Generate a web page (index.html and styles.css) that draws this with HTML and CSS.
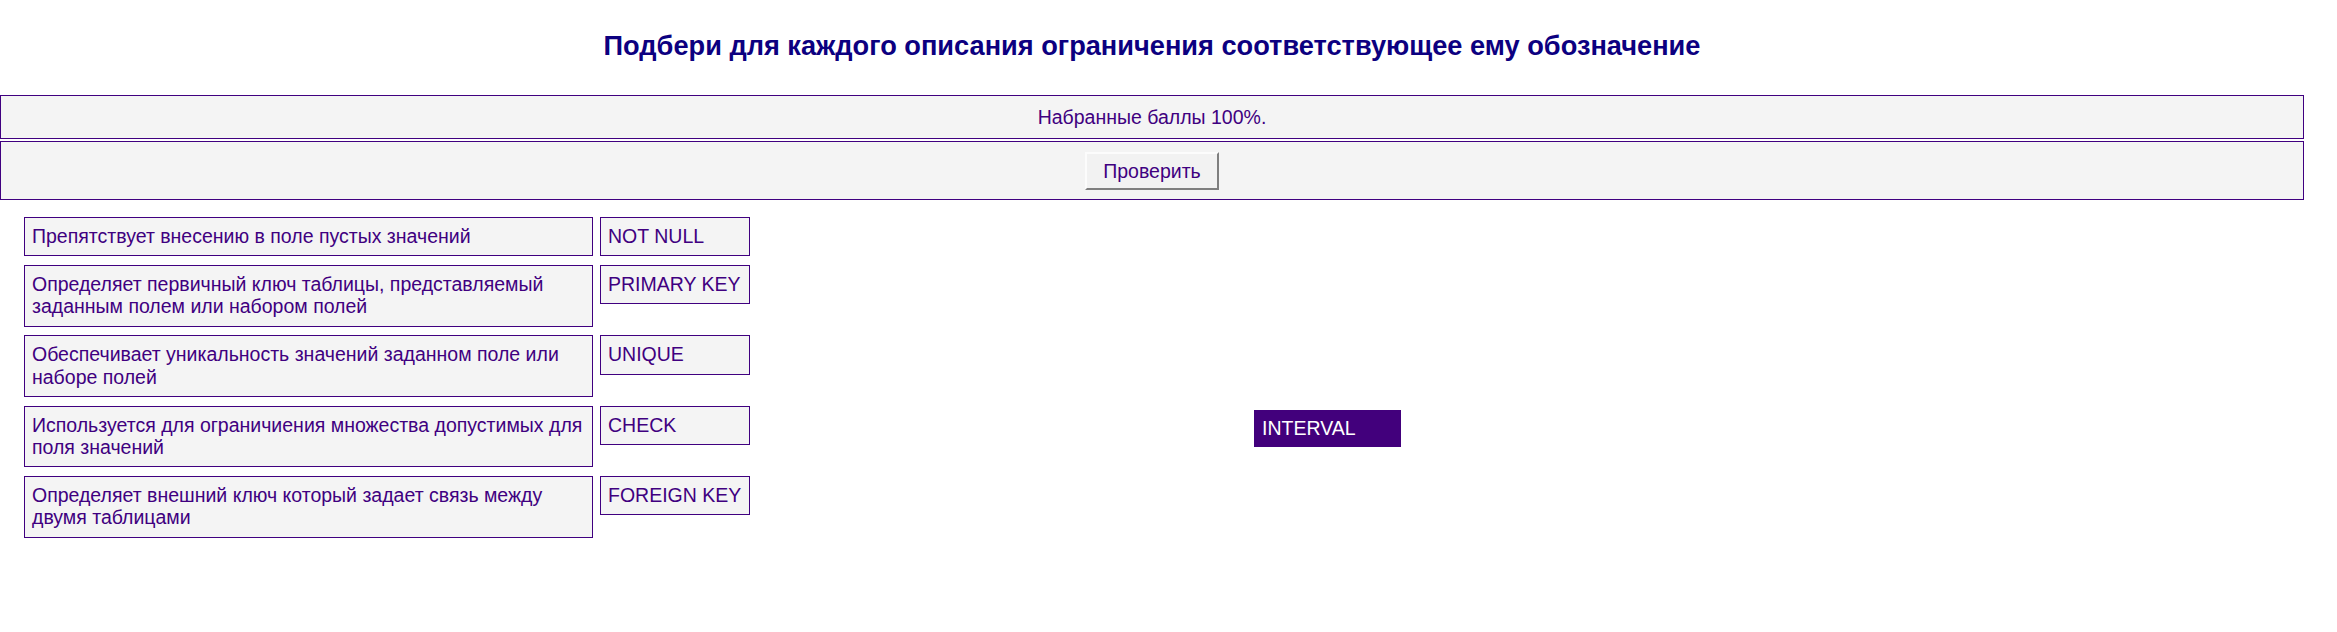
FILE: index.html
```html
<!DOCTYPE html>
<html lang="ru">
<head>
  <meta charset="UTF-8">
  <title>Ограничения</title>
  <link rel="stylesheet" href="styles.css">
</head>
<body>
  <div class="page">
    <h1 class="title">Подбери для каждого описания ограничения соответствующее ему обозначение</h1>

    <div class="panel score">Набранные баллы 100%.</div>
    <div class="panel actions">
      <button class="check-btn">Проверить</button>
    </div>

    <div class="task">
      <div class="pairs">
        <div class="pair">
          <div class="desc">Препятствует внесению в поле пустых значений</div>
          <div class="term">NOT NULL</div>
        </div>
        <div class="pair">
          <div class="desc">Определяет первичный ключ таблицы, представляемый заданным полем или набором полей</div>
          <div class="term">PRIMARY KEY</div>
        </div>
        <div class="pair">
          <div class="desc">Обеспечивает уникальность значений заданном поле или наборе полей</div>
          <div class="term">UNIQUE</div>
        </div>
        <div class="pair">
          <div class="desc">Используется для ограничиения множества допустимых для поля значений</div>
          <div class="term">CHECK</div>
        </div>
        <div class="pair">
          <div class="desc">Определяет внешний ключ который задает связь между двумя таблицами</div>
          <div class="term">FOREIGN KEY</div>
        </div>
      </div>

      <!-- unused answers -->
      <div class="pool">
        <div class="term free">INTERVAL</div>
      </div>
    </div>
  </div>
</body>
</html>
```

FILE: styles.css
```css
body {
  margin: 0;
  font-family: "Liberation Sans", Arial, sans-serif;
  font-size: 19.5px;
  color: #400080;
  background: #fff;
}

.page { width: 2304px; }

.title {
  margin: 0 0 33px;
  padding-top: 30px;
  font-size: 27.2px;
  line-height: 32px;
  font-weight: bold;
  text-align: center;
  color: #0c0080;
}

.panel {
  border: 1px solid #400080;
  background: #f4f4f4;
  text-align: center;
}
.score { padding: 10px 0 9px; }
.actions { margin-top: 2px; padding: 10px 0 9px; line-height: 0; }

.check-btn {
  font: inherit;
  color: #400080;
  line-height: 22px;
  background: #f2f2f2;
  border: 2px solid;
  border-color: #fcfcfc #7f7f7f #7f7f7f #fcfcfc;
  padding: 6px 16px;
  cursor: pointer;
}

.task {
  display: flex;
  align-items: flex-start;
  margin-top: 17px;
  padding-left: 24px;
}

.pair {
  display: flex;
  align-items: flex-start;
  margin-bottom: 8.5px;
}

.desc, .term {
  box-sizing: border-box;
  border: 1px solid #400080;
  background: #f4f4f4;
  padding: 7px 7px 8px;
  line-height: 22.4px;
}
.desc { width: 569px; }
.term { width: 150px; margin-left: 7px; white-space: nowrap; }

.pool { padding: 193px 0 0 504px; }
.term.free {
  width: 147px;
  margin-left: 0;
  border: none;
  background: #42007c;
  color: #fff;
  padding-left: 8px;
  cursor: move;
}
```
